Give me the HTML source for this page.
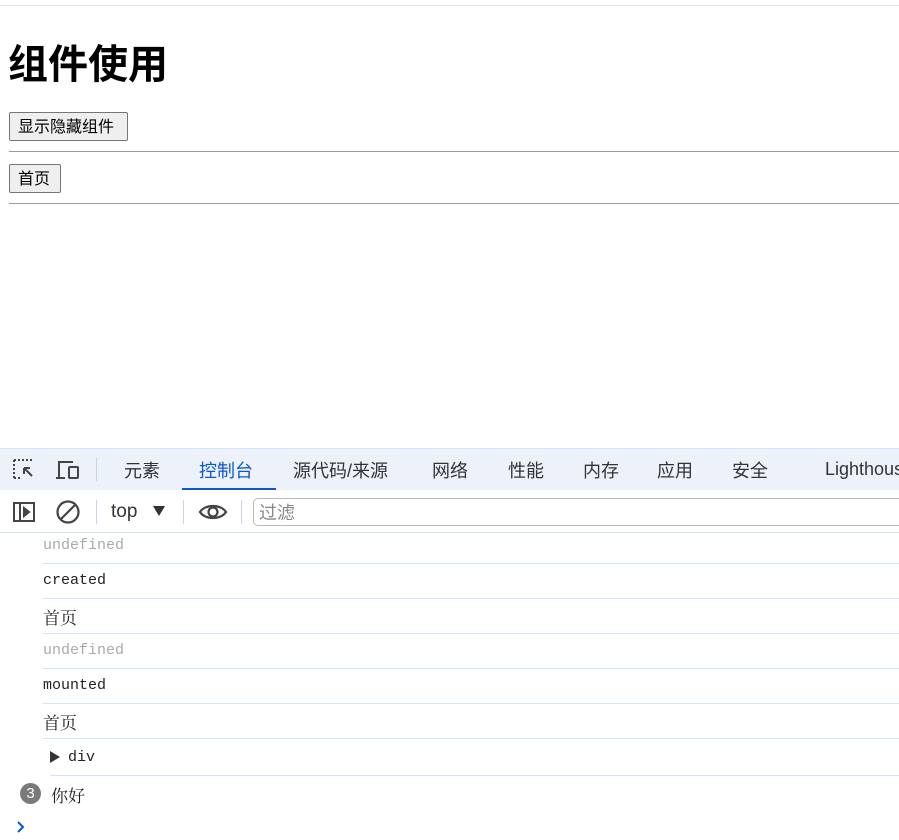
<!DOCTYPE html>
<html><head><meta charset="utf-8"><style>
*{margin:0;padding:0;box-sizing:border-box}
body{width:899px;height:840px;overflow:hidden;background:#fff;position:relative;font-family:"Liberation Sans","Microsoft YaHei","Noto Sans CJK SC",sans-serif}
.a{position:absolute}
.btn{position:absolute;border:1px solid #767676;border-radius:2px;background:#efefef;font-size:16px;font-family:"Liberation Sans","Noto Sans CJK SC",sans-serif;line-height:29px;padding:0 8px;color:#000}
.hr{position:absolute;left:9px;right:0;height:1px;background:#9a9a9a}
.tab{position:absolute;top:457px;font-size:18px;color:#333;font-family:"Liberation Sans","Noto Sans CJK SC",sans-serif}
.row{position:absolute;left:43px;font-family:"Liberation Mono","Noto Serif CJK SC",monospace;font-size:15px;color:#222}
.ln{position:absolute;left:43px;right:0;height:1px;background:#d3e3fd}
</style></head><body>
<div class="a" style="left:0;right:0;top:5px;height:1px;background:#e3e3e3"></div>
<div class="a" style="left:8px;top:33px;font-size:40px;font-weight:bold;font-family:'Noto Sans CJK SC',sans-serif;line-height:56px">组件使用</div>
<div class="btn" style="left:9px;top:112px;height:29px;width:119px">显示隐藏组件</div>
<div class="hr" style="top:151px"></div>
<div class="btn" style="left:9px;top:164px;height:29px;width:52px">首页</div>
<div class="hr" style="top:203px"></div>

<div class="a" style="left:0;right:0;top:448px;height:42px;background:#edf2fa;border-top:1px solid #d3e3fd"></div>
<svg class="a" style="left:12px;top:458px" width="26" height="24" viewBox="0 0 26 24" fill="none" stroke="#444" stroke-width="2"><path d="M2 2h18M2 2v18M2 20h6" stroke-dasharray="2 2"/><path d="M12 10l8 8M12 10h6M12 10v6"/></svg>
<svg class="a" style="left:55px;top:459px" width="26" height="22" viewBox="0 0 26 22" fill="none" stroke="#444" stroke-width="2"><path d="M4 18V3h14M1 19h9"/><rect x="14" y="8" width="9" height="11" rx="1"/></svg>
<div class="a" style="left:96px;top:457px;width:1px;height:24px;background:#c8d4e8"></div>
<div class="tab" style="left:124px">元素</div>
<div class="tab" style="left:199px;color:#0b57d0">控制台</div>
<div class="a" style="left:182px;top:488px;width:94px;height:2px;background:#0b57d0"></div>
<div class="tab" style="left:293px">源代码/来源</div>
<div class="tab" style="left:432px">网络</div>
<div class="tab" style="left:508px">性能</div>
<div class="tab" style="left:583px">内存</div>
<div class="tab" style="left:657px">应用</div>
<div class="tab" style="left:732px">安全</div>
<div class="tab" style="left:825px;top:459px">Lighthouse</div>

<svg class="a" style="left:12px;top:500px" width="24" height="24" viewBox="0 0 24 24" fill="none" stroke="#444" stroke-width="2"><rect x="2" y="3" width="20" height="18"/><path d="M8 3v18"/><path d="M12 8l5 4-5 4z" fill="#444"/></svg>
<svg class="a" style="left:55px;top:499px" width="26" height="26" viewBox="0 0 26 26" fill="none" stroke="#444" stroke-width="2.2"><circle cx="13" cy="13" r="10.5"/><path d="M6 20L20 6"/></svg>
<div class="a" style="left:96px;top:500px;width:1px;height:24px;background:#c8d4e8"></div>
<div class="a" style="left:111px;top:501px;font-size:19px;color:#333">top</div>
<div class="a" style="left:153px;top:506px;width:0;height:0;border-left:6px solid transparent;border-right:6px solid transparent;border-top:10px solid #333"></div>
<div class="a" style="left:183px;top:500px;width:1px;height:24px;background:#c8d4e8"></div>
<svg class="a" style="left:198px;top:500px" width="30" height="24" viewBox="0 0 30 24" fill="none" stroke="#444" stroke-width="2.2"><path d="M2 12C7 4 23 4 28 12C23 20 7 20 2 12z"/><circle cx="15" cy="12" r="4.5"/></svg>
<div class="a" style="left:241px;top:500px;width:1px;height:24px;background:#c8d4e8"></div>
<div class="a" style="left:253px;top:498px;width:660px;height:28px;border:1px solid #bbb;border-radius:5px;color:#888;font-size:18px;padding-left:5px;line-height:26px;font-family:'Noto Sans CJK SC',sans-serif">过滤</div>
<div class="a" style="left:0;right:0;top:532px;height:1px;background:#d3e3fd"></div>

<div class="row" style="top:537px;color:#aaa">undefined</div>
<div class="ln" style="top:563px"></div>
<div class="row" style="top:572px">created</div>
<div class="ln" style="top:598px"></div>
<div class="row" style="top:604px;font-size:17px">首页</div>
<div class="ln" style="top:633px"></div>
<div class="row" style="top:642px;color:#aaa">undefined</div>
<div class="ln" style="top:668px"></div>
<div class="row" style="top:677px">mounted</div>
<div class="ln" style="top:703px"></div>
<div class="row" style="top:709px;font-size:17px">首页</div>
<div class="ln" style="top:738px"></div>
<div class="a" style="left:50px;top:751px;width:0;height:0;border-top:6px solid transparent;border-bottom:6px solid transparent;border-left:10px solid #333"></div>
<div class="row" style="left:68px;top:749px">div</div>
<div class="ln" style="top:775px;left:50px"></div>
<div class="a" style="left:20px;top:783px;width:21px;height:21px;border-radius:50%;background:#7a7a7a;color:#fff;font-size:15px;text-align:center;line-height:21px">3</div>
<div class="row" style="left:51px;top:782px;font-size:17px">你好</div>
<svg class="a" style="left:15px;top:820px" width="12" height="14" viewBox="0 0 12 14" fill="none" stroke="#0b57d0" stroke-width="2"><path d="M3 2l5 5-5 5"/></svg>
</body></html>
